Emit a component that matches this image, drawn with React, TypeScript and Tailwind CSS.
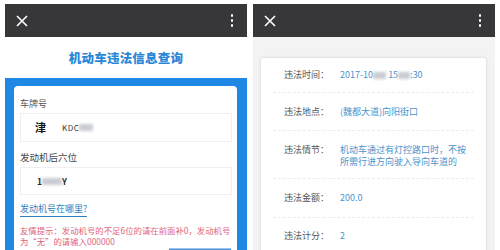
import React from "react";

const font = { fontFamily: '"Noto Sans CJK SC", "Noto Sans", sans-serif' };

const TopBar = () => (
  <div className="h-[33px] shrink-0 bg-[#37373a] flex items-center justify-between pl-[11px] pr-[14px]">
    <svg width="12" height="12" viewBox="0 0 12 12">
      <path d="M1 1 L11 11 M11 1 L1 11" stroke="#ffffff" strokeWidth="1.6" />
    </svg>
    <div className="flex flex-col gap-[2.5px]">
      <span className="w-[2.5px] h-[2.5px] rounded-full bg-white" />
      <span className="w-[2.5px] h-[2.5px] rounded-full bg-white" />
      <span className="w-[2.5px] h-[2.5px] rounded-full bg-white" />
    </div>
  </div>
);

const Blur = ({ w }: { w: number }) => (
  <span
    className="inline-block h-[7px] bg-[#c9ccd2] blur-[1.5px] align-middle"
    style={{ width: w }}
  />
);

const QueryPanel = () => (
  <div className="w-[242px] h-[246px] flex flex-col bg-white">
    <TopBar />
    <div className="h-[41px] shrink-0 flex items-center justify-center pt-[1px]">
      <span className="text-[12.5px] font-black text-[#2a87d8] tracking-[0.2px]">
        机动车违法信息查询
      </span>
    </div>
    <div className="flex-1 min-h-0 bg-[#1f88e4] pt-[8px] pl-[9px] pr-[10px]">
      <div className="h-[200px] bg-white rounded-t-[4px] pl-[6px] pr-[5px] pt-[12px]">
        <div className="text-[9px] leading-[12px] text-[#555]">车牌号</div>
        <div className="mt-[3px] h-[29px] border border-[#efefef] flex items-center pl-[14px]">
          <span className="text-[11px] font-bold text-[#111]">津</span>
          <span className="ml-[16px] text-[8px] text-[#333] tracking-[0.5px]">KDC</span>
          <Blur w={14} />
        </div>
        <div className="mt-[9px] text-[9.5px] leading-[12px] text-[#444]">发动机后六位</div>
        <div className="mt-[4px] h-[28px] border border-[#efefef] flex items-center pl-[16px]">
          <span className="text-[8.5px] font-bold text-[#222]">1</span>
          <Blur w={20} />
          <span className="text-[8.5px] font-bold text-[#222]">Y</span>
        </div>
        <div className="mt-[8px] text-[9px] leading-[12px]">
          <span className="text-[#2f7fbf] border-b border-[#2f7fbf] pb-[1px]">
            发动机号在哪里?
          </span>
        </div>
        <div className="mt-[10px] text-[8.4px] leading-[11px] text-[#e0647b]">
          友情提示：发动机号的不足6位的请在前面补0，发动机号
          <br />
          为“无”的请输入000000
        </div>
        <div className="flex justify-end pr-[1px] mt-[1px]">
          <div className="w-[62px] h-[10px] bg-[#4a95de] border-t border-[#9cc4ea]" />
        </div>
      </div>
    </div>
  </div>
);

const rows: { label: string; value: React.ReactNode; h: string }[] = [
  {
    label: "违法时间：",
    h: "h-[35px] items-center",
    value: (
      <>
        2017-10
        <Blur w={13} />
        {" "}15
        <Blur w={12} />
        :30
      </>
    ),
  },
  { label: "违法地点：", h: "h-[38px] items-center", value: "(魏都大道)向阳街口" },
  {
    label: "违法情节：",
    h: "h-[48px] items-start pt-[13px]",
    value: (
      <>
        机动车通过有灯控路口时，不按
        <br />
        所需行进方向驶入导向车道的
      </>
    ),
  },
  { label: "违法金额：", h: "h-[39px] items-center", value: "200.0" },
  { label: "违法计分：", h: "h-[36px] items-center", value: "2" },
];

const DetailPanel = () => (
  <div className="w-[242px] h-[246px] flex flex-col bg-[#f3f3f3]">
    <TopBar />
    <div className="flex-1 min-h-0 pt-[20px] pl-[7px] pr-[8px]">
      <div className="h-[220px] bg-white border border-[#e6e6e6] rounded-t-[3px] shadow-[0_0_3px_rgba(0,0,0,0.06)] px-[12px]">
        {rows.map((row, idx) => (
          <div
            key={row.label}
            className={`${row.h} flex text-[9px] leading-[12px] ${idx < rows.length - 1 ? "border-b border-dashed border-[#ececec]" : ""}`}
          >
            <div className="w-[67px] pl-[11px] text-[#555] shrink-0">{row.label}</div>
            <div className="text-[#4a93cc]">{row.value}</div>
          </div>
        ))}
      </div>
    </div>
  </div>
);

export default function App() {
  return (
    <div
      className="w-[500px] h-[250px] overflow-hidden bg-white flex gap-[6px] pt-[4px] pl-[5px]"
      style={font}
    >
      <QueryPanel />
      <DetailPanel />
    </div>
  );
}
